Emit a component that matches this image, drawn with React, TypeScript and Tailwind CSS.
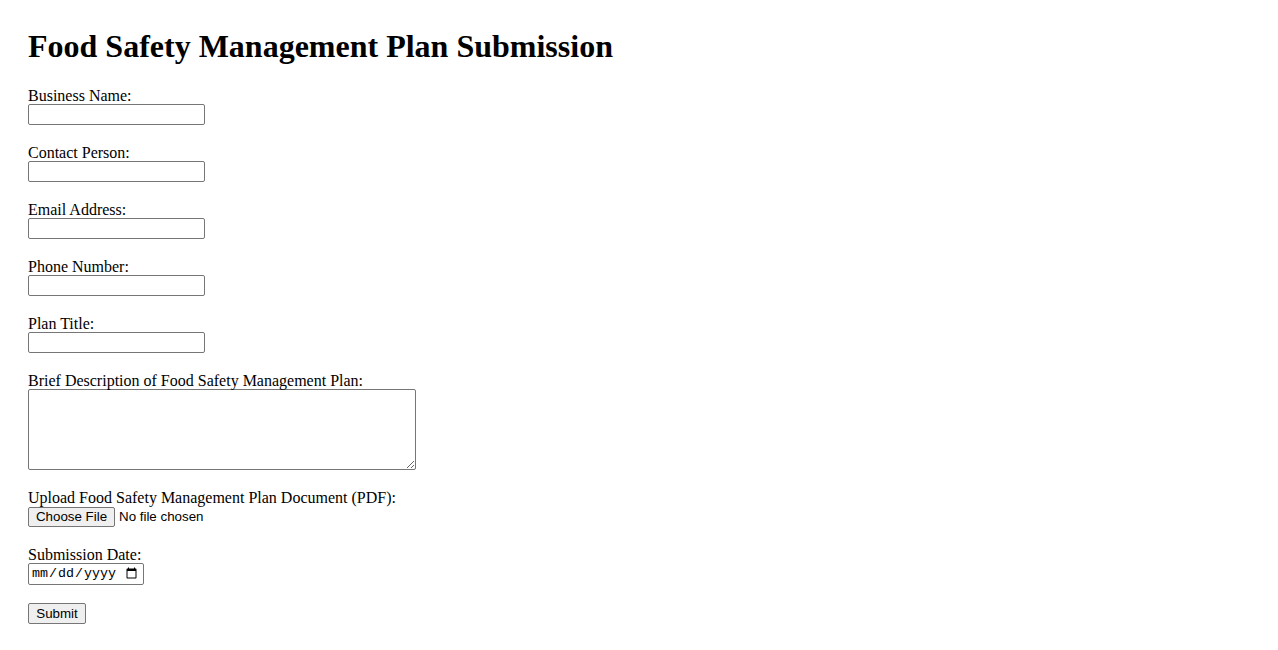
const fields = [
  { id: "businessName", label: "Business Name:", type: "text" },
  { id: "contactPerson", label: "Contact Person:", type: "text" },
  { id: "email", label: "Email Address:", type: "email" },
  { id: "phone", label: "Phone Number:", type: "tel" },
  { id: "planTitle", label: "Plan Title:", type: "text" },
];

const inputCls =
  "block w-[177px] h-[21px] border border-[#767676] rounded-[2px] bg-white px-[2px] py-[1px] text-[13.33px] font-['Liberation_Sans',Arial,sans-serif]";

const btnCls =
  "border border-[#767676] rounded-[2px] bg-[#efefef] text-black text-[13.33px] leading-none font-['Liberation_Sans',Arial,sans-serif]";

export default function App() {
  return (
    <div className="min-h-screen bg-white px-[28px] pt-[28px] text-black text-[16px] font-['Liberation_Serif','Times_New_Roman',serif]">
      <h1 className="text-[32px] font-bold leading-[37px] mb-[21px]">
        Food Safety Management Plan Submission
      </h1>

      <form onSubmit={(e) => e.preventDefault()}>
        {fields.map((f) => (
          <div key={f.id} className="mb-[18px]">
            <label htmlFor={f.id} className="block leading-[18px] pt-px -mb-px">
              {f.label}
            </label>
            <input id={f.id} type={f.type} className={inputCls} />
          </div>
        ))}

        <div className="mb-[18px]">
          <label htmlFor="description" className="block leading-[18px] pt-px -mb-px">
            Brief Description of Food Safety Management Plan:
          </label>
          <textarea
            id="description"
            className="block w-[388px] h-[81px] border border-[#767676] rounded-[2px] bg-white p-[2px] text-[13.33px] font-['Liberation_Mono',monospace]"
          />
        </div>

        <div className="mb-[18px]">
          <label className="block leading-[18px] pt-px -mb-px">
            Upload Food Safety Management Plan Document (PDF):
          </label>
          <div className="flex items-center h-[21px]">
            <button type="button" className={`${btnCls} h-[20px] w-[87px]`}>
              Choose File
            </button>
            <span className="ml-[4px] text-[13.33px] font-['Liberation_Sans',Arial,sans-serif]">
              No file chosen
            </span>
          </div>
        </div>

        <div className="mb-[16px]">
          <label htmlFor="submissionDate" className="block leading-[18px] pt-px -mb-px">
            Submission Date:
          </label>
          <input
            id="submissionDate"
            type="date"
            className="block w-[116px] h-[22px] border border-[#767676] rounded-[2px] bg-white pl-[2px] pr-[3px] text-[13.33px] font-['Liberation_Mono',monospace]"
          />
        </div>

        <button type="submit" className={`${btnCls} h-[21px] w-[58px]`}>
          Submit
        </button>
      </form>
    </div>
  );
}
